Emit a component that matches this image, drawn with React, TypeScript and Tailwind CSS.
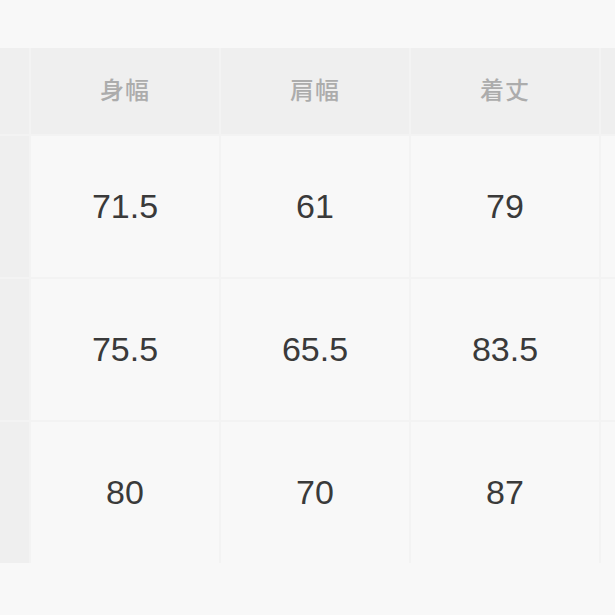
const headers = ["身幅", "肩幅", "着丈", ""];

const rows = [
  ["71.5", "61", "79", ""],
  ["75.5", "65.5", "83.5", ""],
  ["80", "70", "87", ""],
];

export default function App() {
  return (
    <div
      className="w-[615px] h-[615px] overflow-hidden bg-[#f8f8f8] pt-[48px]"
      style={{ fontFamily: '"Liberation Sans", "Noto Sans CJK JP", sans-serif' }}
    >
      <div className="grid grid-cols-[29px_188px_188px_188px_188px] w-[790px] gap-[2px] bg-[#f3f3f3]">
        {/* header row */}
        <div className="h-[86px] bg-[#efefef]" />
        {headers.map((h, i) => (
          <div
            key={i}
            className="h-[86px] bg-[#efefef] flex items-center justify-center text-[24px] font-medium text-[#acacac] tracking-[1px]"
          >
            {h}
          </div>
        ))}

        {rows.map((r, ri) => (
          <div key={ri} className="contents">
            <div className="h-[141px] bg-[#efefef]" />
            {r.map((v, ci) => (
              <div
                key={ci}
                className="h-[141px] bg-[#f8f8f8] flex items-center justify-center text-[34px] text-[#3a3a3a]"
              >
                {v}
              </div>
            ))}
          </div>
        ))}
      </div>
    </div>
  );
}
